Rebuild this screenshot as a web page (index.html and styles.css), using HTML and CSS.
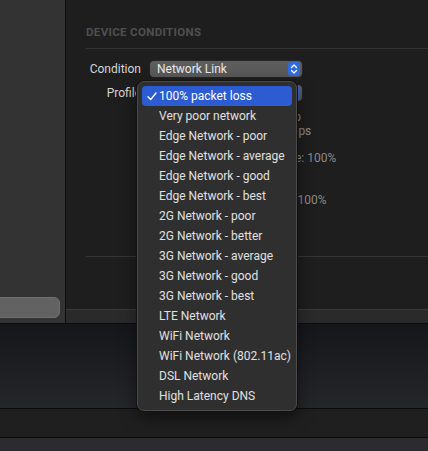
FILE: index.html
```html
<!DOCTYPE html>
<html>
  <head>
    <title>Network Link Conditioner</title>
    <link rel="stylesheet" href="styles.css">
  </head>
  <body>
    <div class="window">
      <div class="sidebar">
        <div class="side-button"></div>
      </div>
      <div class="main">
        <div class="content">
          <h5 class="section-title">DEVICE CONDITIONS</h5>
          <div class="form-row">
            <label class="field-label">Condition</label>
            <div class="popup-button">
              <span>Network Link</span>
              <span class="stepper">
                <svg width="12" height="14" viewBox="0 0 12 14"><path d="M3.5 5.5 L6 3 L8.5 5.5 M3.5 8.5 L6 11 L8.5 8.5" fill="none" stroke="#fff" stroke-width="1.3" stroke-linecap="round" stroke-linejoin="round"/></svg>
              </span>
            </div>
          </div>
          <div class="form-row">
            <label class="field-label">Profile</label>
            <div class="popup-button">
              <span>100% packet loss</span>
              <span class="stepper">
                <svg width="12" height="14" viewBox="0 0 12 14"><path d="M3.5 5.5 L6 3 L8.5 5.5 M3.5 8.5 L6 11 L8.5 8.5" fill="none" stroke="#fff" stroke-width="1.3" stroke-linecap="round" stroke-linejoin="round"/></svg>
              </span>
            </div>
          </div>
          <div class="details">
            <p>Downlink Delay: 10 ms - Up</p>
            <p>Uplink Bandwidth: 10, 0 Kbps</p>
            <p class="gap">Downlink Packet Loss Rate: 100%</p>
            <p class="gap-lg">Uplink Packets Loss Rate: 100%</p>
          </div>
          <div class="divider"></div>
        </div>
        <div class="footer-bar"></div>
      </div>

      <!-- open profile menu -->
      <ul class="menu">
        <li class="selected">
          <svg class="check" width="10" height="9" viewBox="0 0 10 9"><path d="M1 4.8 L3.7 7.6 L9 1" fill="none" stroke="#fff" stroke-width="1.4" stroke-linecap="round" stroke-linejoin="round"/></svg>
          100% packet loss
        </li>
        <li>Very poor network</li>
        <li>Edge Network - poor</li>
        <li>Edge Network - average</li>
        <li>Edge Network - good</li>
        <li>Edge Network - best</li>
        <li>2G Network - poor</li>
        <li>2G Network - better</li>
        <li>3G Network - average</li>
        <li>3G Network - good</li>
        <li>3G Network - best</li>
        <li>LTE Network</li>
        <li>WiFi Network</li>
        <li>WiFi Network (802.11ac)</li>
        <li>DSL Network</li>
        <li>High Latency DNS</li>
      </ul>
    </div>
    <div class="desktop"></div>
    <div class="dock"></div>
    <div class="bottom"></div>
  </body>
</html>
```

FILE: styles.css
```css
body {
  margin: 0;
  background-color: #2c2c30;
  font-family: 'Roboto', 'Liberation Sans', sans-serif;
  font-size: 12px;
  overflow: hidden;
}

.window {
  position: relative;
  display: flex;
  height: 323px;
  border-bottom: 1px solid #0c0c0d;
}

.sidebar {
  width: 65px;
  background-color: #333333;
  border-right: 1px solid #0f0f0f;
  display: flex;
  flex-direction: column;
  justify-content: flex-end;
  overflow: hidden;
}

.side-button {
  height: 19px;
  margin: 0 5px 5px -10px;
  background-color: #626262;
  border: 1px solid #6f6f6f;
  border-radius: 6px;
}

.main {
  flex: 1;
  display: flex;
  flex-direction: column;
  background-color: #1e1e1e;
}

.content {
  flex: 1;
  padding: 26px 0 0 20px;
}

.section-title {
  margin: 0;
  font-size: 11.5px;
  line-height: 12px;
  font-weight: 700;
  letter-spacing: 0.35px;
  color: #505050;
  padding-bottom: 10px;
  border-bottom: 1px solid #343434;
}

.form-row {
  display: flex;
  align-items: center;
  height: 16px;
  margin-top: 12px;
}

.form-row + .form-row {
  margin-top: 8px;
}

.field-label {
  width: 55px;
  text-align: right;
  color: #d6d6d6;
  margin-right: 9px;
}

.popup-button {
  box-sizing: border-box;
  width: 152px;
  height: 16px;
  display: flex;
  align-items: center;
  justify-content: space-between;
  padding: 0 2px 0 7px;
  background: linear-gradient(#5e5e5e, #575757);
  border-radius: 4px;
  color: #e8e8e8;
  box-shadow: 0 0 0 0.5px #2a2a2a;
}

.stepper {
  width: 12px;
  height: 14px;
  display: flex;
  background-color: #2f6bdc;
  border-radius: 3px;
}

.details {
  margin: 9px 0 0 71px;
  color: #8a8a8a;
  white-space: nowrap;
}

.details p {
  margin: 0;
  line-height: 14px;
}

.details .gap {
  margin-top: 13px;
}

.details .gap-lg {
  margin-top: 28px;
}

.divider {
  margin-top: 49px;
  border-top: 1px solid #363636;
}

.footer-bar {
  height: 13px;
  background-color: #2a2a2a;
  border-top: 1px solid #3b3b3b;
}

.menu {
  position: absolute;
  left: 137px;
  top: 81px;
  width: 150px;
  margin: 0;
  padding: 4px;
  list-style: none;
  font-size: 12px;
  background-color: #2f2f2f;
  border: 1px solid #4b4b4b;
  border-radius: 7px;
  box-shadow: 0 0 0 1px #111, 0 6px 16px rgba(0, 0, 0, 0.5);
}

.menu li {
  position: relative;
  height: 20px;
  line-height: 20px;
  padding-left: 17px;
  border-radius: 4px;
  color: #e0e0e0;
  white-space: nowrap;
}

.menu li.selected {
  background-color: #2c5bd2;
  color: #ffffff;
}

.check {
  position: absolute;
  left: 5px;
  top: 6px;
}

.desktop {
  height: 84px;
  background: linear-gradient(#15161a, #25262a);
}

.dock {
  height: 28px;
  background-color: #1f1f20;
  border-top: 1px solid #0a0a0a;
  border-bottom: 1px solid #0a0a0a;
}

.bottom {
  height: 20px;
  background-color: #2c2c30;
}
```
